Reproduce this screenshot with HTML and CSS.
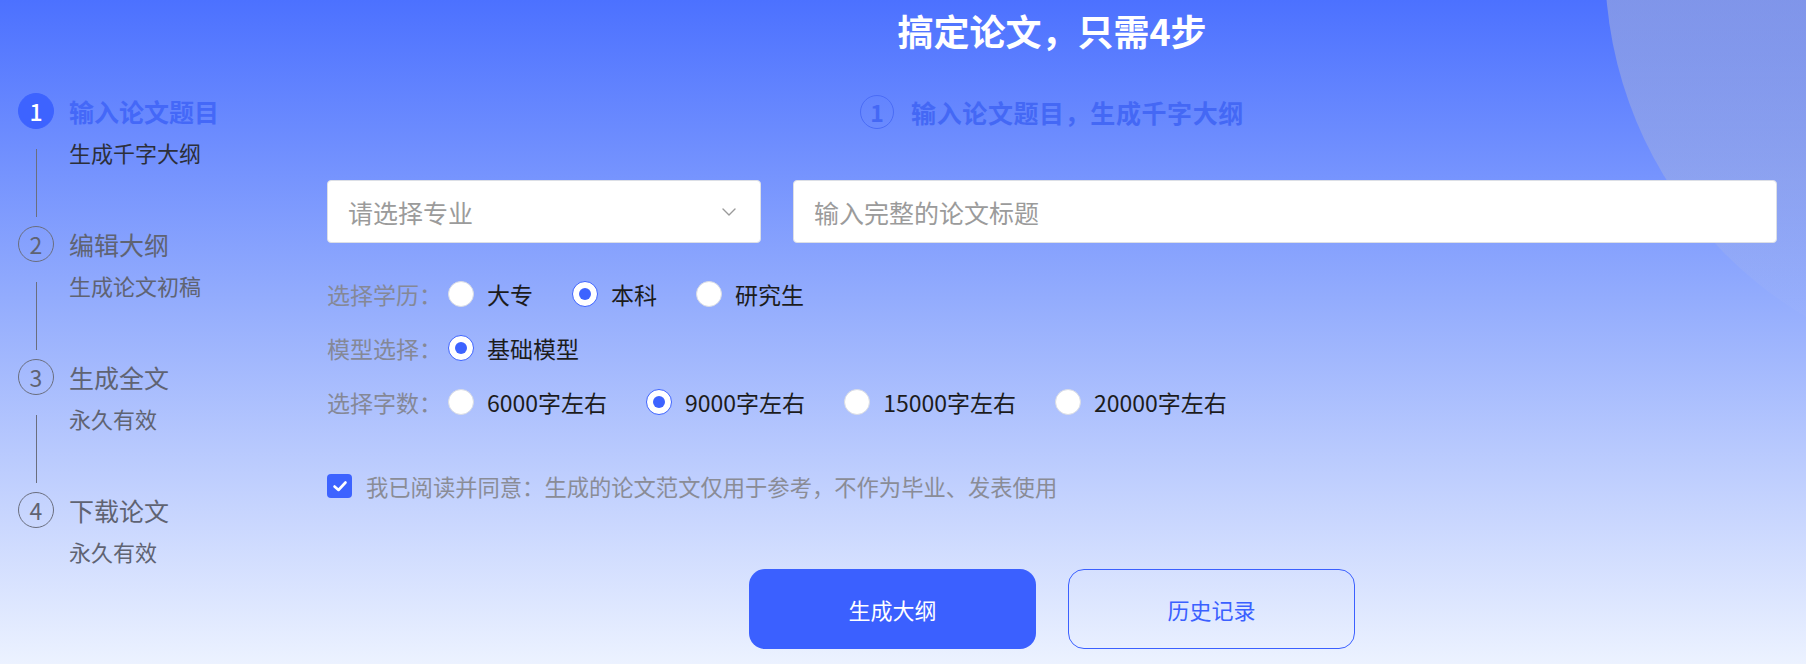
FILE: index.html
```html
<!DOCTYPE html>
<html lang="zh-CN">
<head>
<meta charset="utf-8">
<title>搞定论文，只需4步</title>
<link rel="stylesheet" href="styles.css">
</head>
<body>
<div class="page">
  <div class="deco-circle"></div>

  <ol class="steps">
    <li class="step active">
      <span class="step-num">1</span>
      <span class="step-title">输入论文题目</span>
      <span class="step-line"></span>
      <span class="step-sub">生成千字大纲</span>
    </li>
    <li class="step">
      <span class="step-num">2</span>
      <span class="step-title">编辑大纲</span>
      <span class="step-line"></span>
      <span class="step-sub">生成论文初稿</span>
    </li>
    <li class="step">
      <span class="step-num">3</span>
      <span class="step-title">生成全文</span>
      <span class="step-line"></span>
      <span class="step-sub">永久有效</span>
    </li>
    <li class="step last">
      <span class="step-num">4</span>
      <span class="step-title">下载论文</span>
      <span class="step-sub">永久有效</span>
    </li>
  </ol>

  <main class="main">
    <h1 class="title">搞定论文，只需4步</h1>

    <div class="stage">
      <span class="stage-num">1</span>
      <span class="stage-text">输入论文题目，生成千字大纲</span>
    </div>

    <div class="fields">
      <div class="field select">
        <span class="placeholder">请选择专业</span>
        <svg class="chevron" width="14" height="8" viewBox="0 0 14 8"><polyline points="1,1 7,7 13,1" fill="none" stroke="#9a9a9a" stroke-width="1.4" stroke-linecap="round" stroke-linejoin="round"/></svg>
      </div>
      <div class="field text">
        <span class="placeholder">输入完整的论文标题</span>
      </div>
    </div>

    <div class="opt-row">
      <span class="opt-label">选择学历：</span>
      <span class="opt"><span class="radio"></span><span class="opt-text">大专</span></span>
      <span class="opt"><span class="radio on"></span><span class="opt-text">本科</span></span>
      <span class="opt"><span class="radio"></span><span class="opt-text">研究生</span></span>
    </div>
    <div class="opt-row">
      <span class="opt-label">模型选择：</span>
      <span class="opt"><span class="radio on"></span><span class="opt-text">基础模型</span></span>
    </div>
    <div class="opt-row">
      <span class="opt-label">选择字数：</span>
      <span class="opt"><span class="radio"></span><span class="opt-text">6000字左右</span></span>
      <span class="opt"><span class="radio on"></span><span class="opt-text">9000字左右</span></span>
      <span class="opt"><span class="radio"></span><span class="opt-text">15000字左右</span></span>
      <span class="opt"><span class="radio"></span><span class="opt-text">20000字左右</span></span>
    </div>

    <div class="agree">
      <span class="checkbox"><svg width="24" height="24" viewBox="0 0 24 24"><polyline points="6.5,12.5 10.5,16 17.5,8.5" fill="none" stroke="#fff" stroke-width="2.6" stroke-linecap="round" stroke-linejoin="round"/></svg></span>
      <span class="agree-text">我已阅读并同意：生成的论文范文仅用于参考，不作为毕业、发表使用</span>
    </div>

    <div class="actions">
      <button class="btn primary">生成大纲</button>
      <button class="btn ghost">历史记录</button>
    </div>
  </main>
</div>
</body>
</html>
```

FILE: styles.css
```css
* { box-sizing: border-box; }

html, body {
  margin: 0;
  padding: 0;
}

body {
  font-family: "Noto Sans CJK SC", "Noto Sans", sans-serif;
  color: #222;
}

.page {
  position: relative;
  overflow: hidden;
  width: 1806px;
  height: 664px;
  display: grid;
  grid-template-columns: 327px 1fr;
  padding-right: 29px;
  background: linear-gradient(180deg, #4c71ff 0%, #93acfd 45%, #ecf2ff 100%);
}

.deco-circle {
  position: absolute;
  left: 1605px;
  top: -446px;
  width: 820px;
  height: 820px;
  border-radius: 50%;
  background: linear-gradient(180deg,
    rgba(200, 200, 204, 0.42) 54%,
    rgba(200, 200, 204, 0.27) 76%,
    rgba(200, 205, 230, 0.05) 91%,
    rgba(200, 205, 230, 0) 100%);
  z-index: 0;
}

/* ---------- sidebar steps ---------- */
.steps {
  list-style: none;
  margin: 0;
  padding: 93px 0 0 18px;
  position: relative;
  z-index: 1;
}

.step {
  display: grid;
  grid-template-columns: 36px auto;
  grid-template-rows: 36px 97px;
  column-gap: 15px;
  color: #666;
}

.step.last { grid-template-rows: 36px auto; }

.step-num {
  width: 36px;
  height: 36px;
  border-radius: 50%;
  border: 1px solid #6a6e7e;
  display: flex;
  align-items: center;
  justify-content: center;
  font-size: 23px;
  color: #5f6372;
  line-height: 1;
}

.step-title {
  font-size: 25px;
  line-height: 36px;
  color: #5f6372;
  white-space: nowrap;
}

.step-line {
  justify-self: center;
  align-self: start;
  width: 1px;
  height: 68px;
  margin-top: 20px;
  background: #6a6e7e;
}

.step-sub {
  grid-column: 2;
  align-self: start;
  margin-top: 8px;
  font-size: 22px;
  line-height: 30px;
  color: #5f6372;
  white-space: nowrap;
}

.step.active .step-num {
  background: #3d63ff;
  border-color: #3d63ff;
  color: #fff;
  font-weight: 500;
}

.step.active .step-title {
  color: #4468f8;
  font-weight: 600;
}

.step.active .step-sub { color: #2c2f3a; }

/* ---------- main ---------- */
.main {
  position: relative;
  z-index: 1;
  display: flex;
  flex-direction: column;
}

.title {
  margin: 0;
  padding-top: 5px;
  font-size: 36px;
  line-height: 50px;
  font-weight: 700;
  color: #fff;
  text-align: center;
}

.stage {
  margin-top: 40px;
  display: flex;
  align-items: center;
  justify-content: center;
  gap: 17px;
  color: #4468f5;
}

.stage-num {
  width: 34px;
  height: 34px;
  border-radius: 50%;
  border: 1px solid #4a6cf6;
  display: flex;
  align-items: center;
  justify-content: center;
  font-size: 23px;
  font-weight: 700;
  line-height: 1;
}

.stage-text {
  font-size: 25px;
  font-weight: 700;
  letter-spacing: 0.6px;
  line-height: 34px;
}

.fields {
  margin-top: 51px;
  display: grid;
  grid-template-columns: 434px 1fr;
  gap: 32px;
}

.field {
  height: 63px;
  background: #fff;
  border: 1px solid #dcdfe6;
  border-radius: 4px;
  display: flex;
  align-items: center;
  padding: 0 24px 0 20px;
}

.select { justify-content: space-between; }

.placeholder {
  font-size: 25px;
  color: #9b9b9b;
  white-space: nowrap;
}

.chevron { display: block; }

.opt-row {
  display: flex;
  align-items: center;
  height: 30px;
  margin-top: 24px;
}

.fields + .opt-row { margin-top: 36px; }

.opt-label {
  width: 121px;
  font-size: 23px;
  color: #858896;
  white-space: nowrap;
}

.opt {
  display: flex;
  align-items: center;
  gap: 13px;
  margin-right: 39px;
}

.opt-text {
  font-size: 23px;
  color: #1c1c1c;
  white-space: nowrap;
}

.radio {
  width: 26px;
  height: 26px;
  border-radius: 50%;
  background: #fff;
  border: 1px solid #d9dce4;
  display: flex;
  align-items: center;
  justify-content: center;
}

.radio.on { border-color: #3d63ff; }

.radio.on::after {
  content: "";
  width: 12px;
  height: 12px;
  border-radius: 50%;
  background: #3d63ff;
}

.agree {
  margin-top: 57px;
  display: flex;
  align-items: center;
  gap: 14px;
  height: 24px;
}

.checkbox {
  width: 25px;
  height: 24px;
  border-radius: 4px;
  background: #3d63ff;
  display: flex;
  align-items: center;
  justify-content: center;
}

.checkbox svg { display: block; }

.agree-text {
  font-size: 22.3px;
  color: #8a8c96;
  white-space: nowrap;
}

.actions {
  margin-top: 71px;
  display: flex;
  justify-content: center;
  gap: 32px;
}

.btn {
  width: 287px;
  height: 80px;
  border-radius: 16px;
  font-family: inherit;
  font-size: 22px;
  cursor: pointer;
}

.btn.primary {
  background: #3b60ff;
  border: none;
  color: #fff;
}

.btn.ghost {
  background: transparent;
  border: 1px solid #3b60ff;
  color: #3b60ff;
}
```
